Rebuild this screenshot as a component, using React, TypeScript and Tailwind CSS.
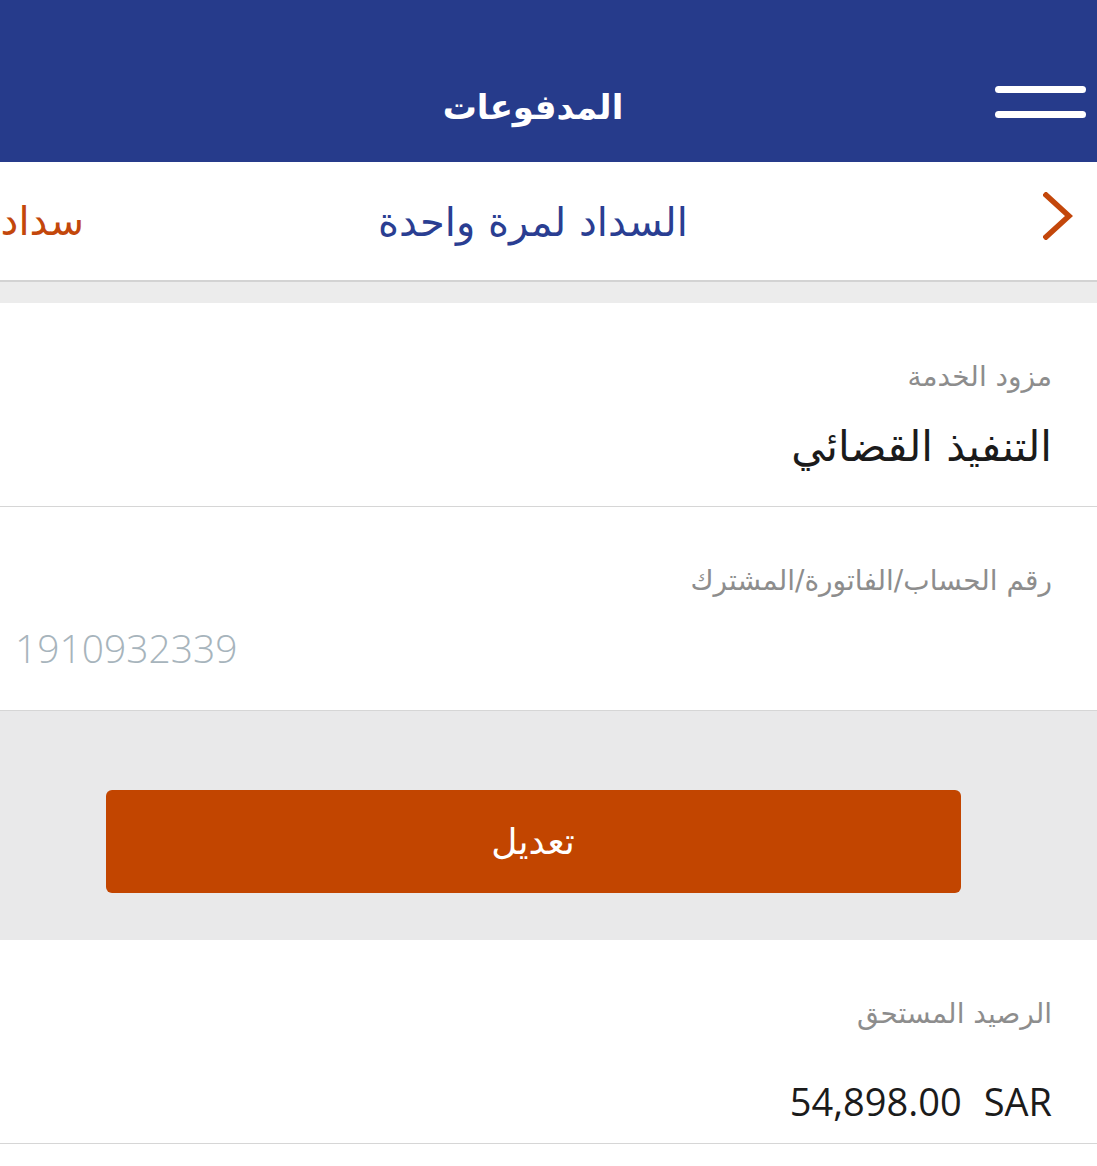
const arabic = { fontFamily: '"DejaVu Sans", "Noto Sans", sans-serif' }

function Field({ label, children }: { label: string; children: React.ReactNode }) {
    return (
        <div className="h-[204px] bg-white border-b border-[#d6d6d6] px-[45px] pt-[52px]">
            <div className="text-[28px] text-[#8d8d8d] leading-[44px]">{label}</div>
            {children}
        </div>
    )
}

export default function App() {
    return (
        <div dir="rtl" className="w-[1097px] min-h-[1166px] bg-white overflow-hidden" style={arabic}>
            {/* header */}
            <div className="h-[162px] bg-[#263b8b] relative flex items-center justify-center pr-[31px]">
                <div className="absolute right-[11px] top-[86px] flex flex-col gap-[18px]">
                    <div className="w-[91px] h-[7px] rounded-full bg-white"></div>
                    <div className="w-[91px] h-[7px] rounded-full bg-white"></div>
                </div>
                <h1 className="text-white text-[34px] font-bold pt-[52px]">المدفوعات</h1>
            </div>

            {/* tabs */}
            <div className="h-[120px] border-b-2 border-[#d3d3d3] flex items-center justify-between overflow-hidden">
                <div className="w-[115px] flex justify-start pr-[24px] mt-[-10px]">
                    <svg width="30" height="48" viewBox="0 0 30 48" fill="none">
                        <polyline points="3,3 26,24 3,45" stroke="#c3470b" strokeWidth="5.5" strokeLinecap="square" />
                    </svg>
                </div>
                <div className="text-[#2a3e92] text-[40px] pt-[2px]">السداد لمرة واحدة</div>
                <div className="w-[84px] flex justify-start overflow-hidden">
                    <span className="text-[#c3470b] text-[40px] whitespace-nowrap">سداد</span>
                </div>
            </div>

            <div className="h-[21px] bg-[#ececec]"></div>

            <Field label="مزود الخدمة">
                <div className="text-[42px] text-[#1b1b1b] mt-[16px]">التنفيذ القضائي</div>
            </Field>

            <Field label="رقم الحساب/الفاتورة/المشترك">
                <div dir="ltr" className="text-[39px] text-[#a7b4bc] mt-[16px] ml-[-30px] font-light" style={{ fontFamily: '"Open Sans", sans-serif' }}>1910932339</div>
            </Field>

            {/* action area */}
            <div className="h-[229px] bg-[#e9e9ea] flex items-start justify-center pt-[79px] pr-[31px]">
                <button className="w-[855px] h-[103px] bg-[#c24500] rounded-[6px] text-white text-[36px]">تعديل</button>
            </div>

            <Field label="الرصيد المستحق">
                <div dir="rtl" className="text-[38px] text-[#1b1b1b] mt-[37px] flex gap-[22px]" style={{ fontFamily: '"Open Sans", sans-serif' }}>
                    <span>SAR</span>
                    <span>54,898.00</span>
                </div>
            </Field>
        </div>
    )
}
